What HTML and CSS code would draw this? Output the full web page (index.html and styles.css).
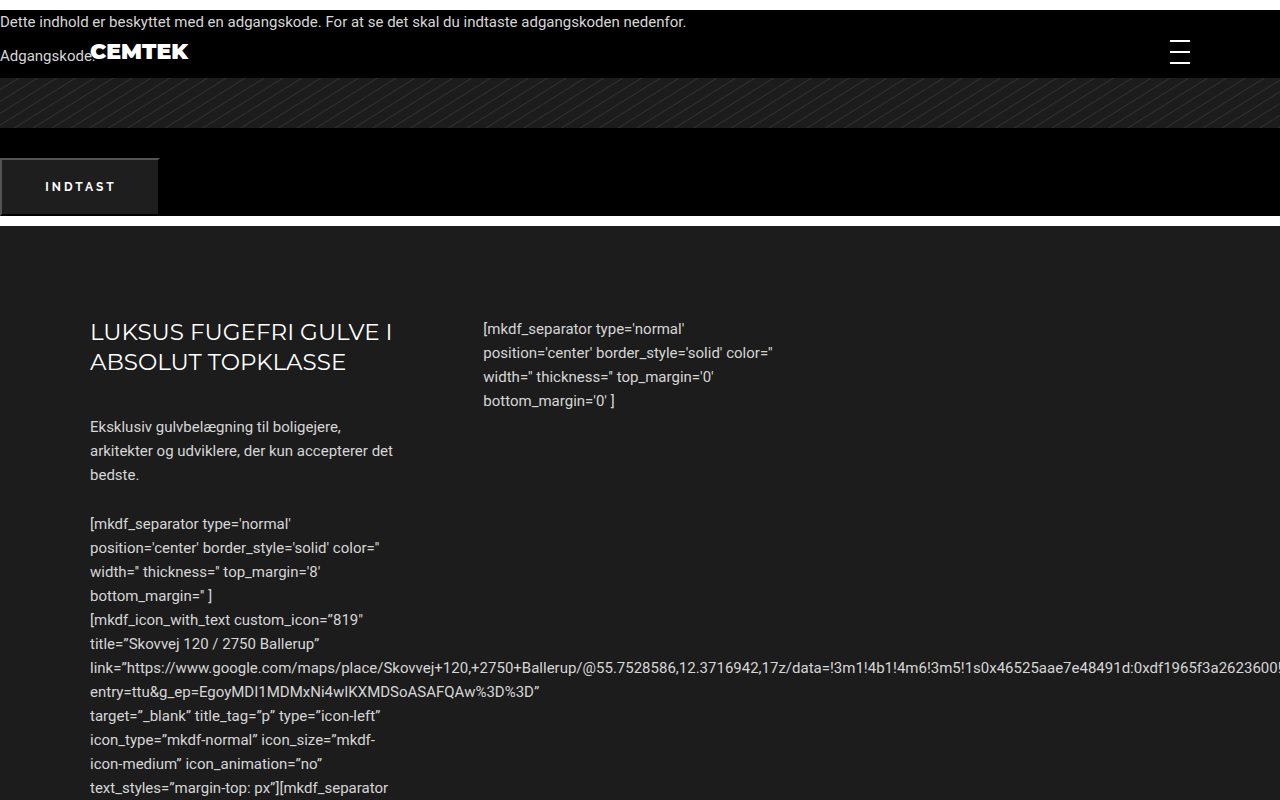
FILE: index.html
```html
<!DOCTYPE html>
<html lang="da">
<head>
<meta charset="utf-8">
<meta name="viewport" content="width=device-width, initial-scale=1">
<title>Cemtek</title>
<link rel="stylesheet" href="styles.css">
</head>
<body>
<header class="header">
  <a class="logo" href="#">CEMTEK</a>
  <button class="menu" type="button" aria-label="Menu"><span class="bar"></span><span class="bar"></span><span class="bar"></span></button>
</header>
<main class="protected">
  <form class="form">
    <p class="intro">Dette indhold er beskyttet med en adgangskode. For at se det skal du indtaste adgangskoden nedenfor.</p>
    <label class="label" for="password">Adgangskode:</label>
    <input class="field" id="password" type="password">
    <button class="submit" type="submit">INDTAST</button>
  </form>
</main>
<footer class="footer">
  <div class="columns">
    <div class="column">
      <h2 class="title">LUKSUS FUGEFRI GULVE I ABSOLUT TOPKLASSE</h2>
      <p class="lead">Eksklusiv gulvbelægning til boligejere, arkitekter og udviklere, der kun accepterer det bedste.</p>
      <p class="code">[mkdf_separator type='normal' position='center' border_style='solid' color='' width='' thickness='' top_margin='8' bottom_margin='' ]<br>[mkdf_icon_with_text custom_icon=”819″ title=”Skovvej 120 / 2750 Ballerup” link=”https://www.google.com/maps/place/Skovvej+120,+2750+Ballerup/@55.7528586,12.3716942,17z/data=!3m1!4b1!4m6!3m5!1s0x46525aae7e48491d:0xdf1965f3a2623600!8m2<wbr>entry=ttu&amp;g_ep=EgoyMDI1MDMxNi4wIKXMDSoASAFQAw%3D%3D” target=”_blank” title_tag=”p” type=”icon-left” icon_type=”mkdf-normal” icon_size=”mkdf-icon-medium” icon_animation=”no” text_styles=”margin-top: px”][mkdf_separator</p>
    </div>
    <div class="column">
      <p class="code">[mkdf_separator type='normal' position='center' border_style='solid' color='' width='' thickness='' top_margin='0' bottom_margin='0' ]</p>
    </div>
  </div>
</footer>
</body>
</html>
```
FILE: styles.css
```css
* { box-sizing: border-box; }
body {
  margin: 0;
  position: relative;
  background: #fff;
  color: #d6d6d6;
  font: 15px/24px Roboto, sans-serif;
}
p, h2 { margin: 0; }
.header {
  position: absolute;
  top: 0;
  left: 0;
  right: 0;
  padding: 40px 90px 0;
  display: flex;
  justify-content: space-between;
  align-items: flex-start;
}
.logo {
  color: #fff;
  font: 900 22px/24px Montserrat, "DejaVu Sans", sans-serif;
  text-decoration: none;
}
.menu {
  display: flex;
  flex-direction: column;
  gap: 9px;
  width: 20px;
  padding: 0;
  border: 0;
  background: none;
}
.bar {
  width: 100%;
  height: 2px;
  background: #fff;
}
.protected { padding: 10px 0; }
.form {
  display: flex;
  flex-direction: column;
  align-items: flex-start;
  background: #000;
}
.label { margin: 10px 0; }
.field {
  width: 100%;
  height: 50px;
  margin-bottom: 30px;
  padding: 0 20px;
  border: 0;
  border-radius: 0;
  color: #fff;
  background: #1c1c1c repeating-linear-gradient(148deg, #303030 0, #1c1c1c 1px, #1c1c1c 9px, #303030 10px);
}
.submit {
  min-width: 160px;
  padding: 18px 40px 18px 42px;
  border: 2px outset #000;
  border-color: #545454 #000 #000 #545454;
  color: #fff;
  background: #1e1e1e;
  font: bold 12px/18px Raleway, Montserrat, "Open Sans", sans-serif;
  letter-spacing: 3px;
}
.footer {
  padding: 91px 90px 0;
  background: #1c1c1c;
  overflow: hidden;
}
.columns {
  display: grid;
  grid-template-columns: repeat(3, minmax(0, 1fr));
  gap: 80px;
}
.title {
  margin-bottom: 38px;
  color: #fff;
  font: 400 23px/30px Montserrat, Inter, sans-serif;
}
.lead { margin-bottom: 25px; }
```
